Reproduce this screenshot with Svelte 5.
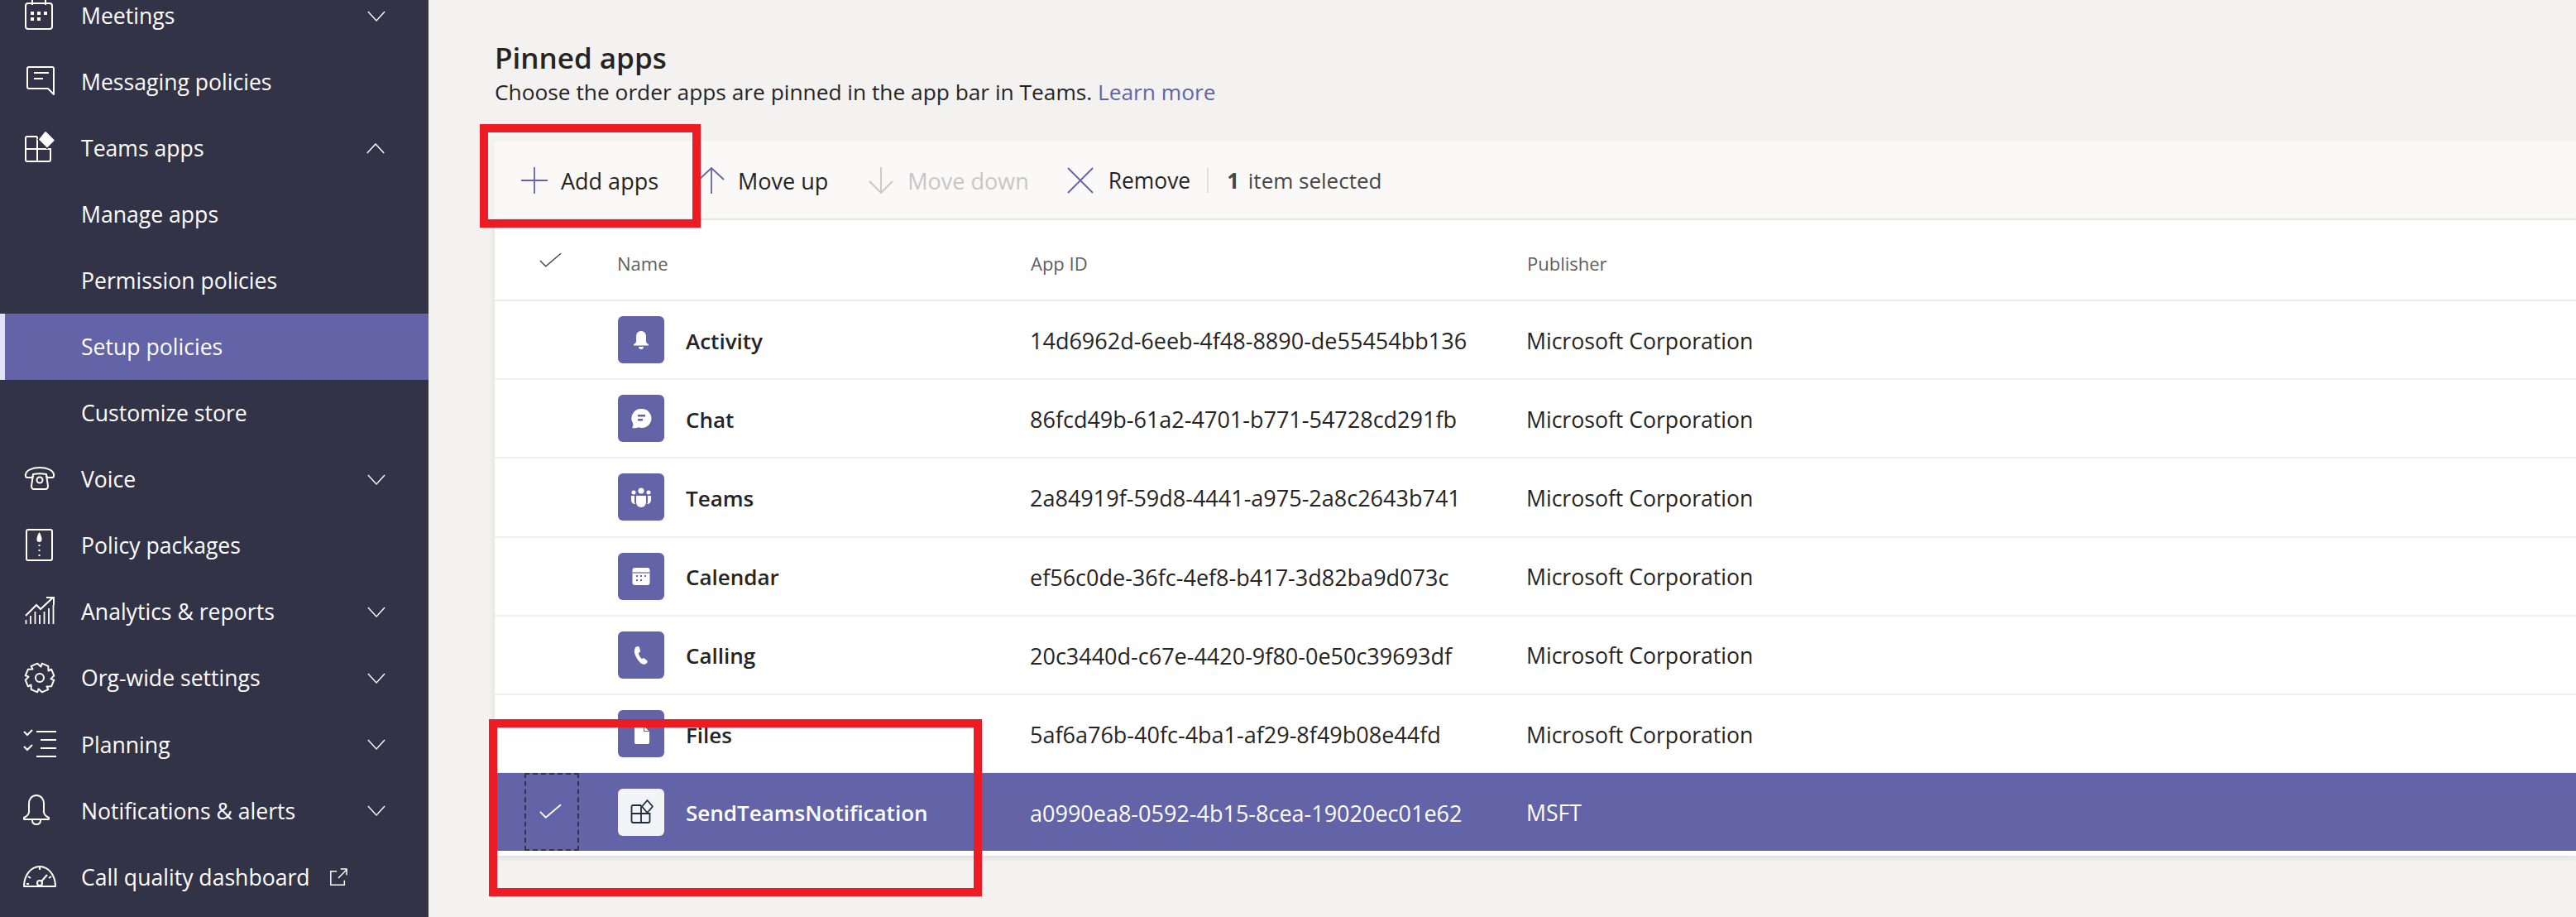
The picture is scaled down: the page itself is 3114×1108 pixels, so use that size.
<script>
  const navItems = [
    { label: "Meetings", icon: "meetings", chevron: "down" },
    { label: "Messaging policies", icon: "messaging" },
    { label: "Teams apps", icon: "apps", chevron: "up" },
    { label: "Manage apps" },
    { label: "Permission policies" },
    { label: "Setup policies", active: true },
    { label: "Customize store" },
    { label: "Voice", icon: "voice", chevron: "down" },
    { label: "Policy packages", icon: "packages" },
    { label: "Analytics & reports", icon: "analytics", chevron: "down" },
    { label: "Org-wide settings", icon: "settings", chevron: "down" },
    { label: "Planning", icon: "planning", chevron: "down" },
    { label: "Notifications & alerts", icon: "bell", chevron: "down" },
    { label: "Call quality dashboard", icon: "gauge", external: true },
  ];

  const apps = [
    { name: "Activity", id: "14d6962d-6eeb-4f48-8890-de55454bb136", publisher: "Microsoft Corporation", icon: "activity" },
    { name: "Chat", id: "86fcd49b-61a2-4701-b771-54728cd291fb", publisher: "Microsoft Corporation", icon: "chat" },
    { name: "Teams", id: "2a84919f-59d8-4441-a975-2a8c2643b741", publisher: "Microsoft Corporation", icon: "teams" },
    { name: "Calendar", id: "ef56c0de-36fc-4ef8-b417-3d82ba9d073c", publisher: "Microsoft Corporation", icon: "calendar" },
    { name: "Calling", id: "20c3440d-c67e-4420-9f80-0e50c39693df", publisher: "Microsoft Corporation", icon: "calling" },
    { name: "Files", id: "5af6a76b-40fc-4ba1-af29-8f49b08e44fd", publisher: "Microsoft Corporation", icon: "files" },
    { name: "SendTeamsNotification", id: "a0990ea8-0592-4b15-8cea-19020ec01e62", publisher: "MSFT", icon: "custom", selected: true },
  ];

  // eight lobed cog outline, centred in the 40 box
  function gearPath() {
    const pts = [];
    for (let i = 0; i < 8; i++) {
      const a = (i * Math.PI) / 4 + Math.PI / 8;
      for (const [off, r] of [[-0.24, 17.5], [0.24, 17.5], [0.5, 13.5]]) {
        const t = a + off;
        pts.push(`${(20 + r * Math.cos(t)).toFixed(1)} ${(20 + r * Math.sin(t)).toFixed(1)}`);
      }
    }
    return "M" + pts.join("L") + "Z";
  }
</script>

{#snippet navIcon(name)}
  <svg class="nav-icon" viewBox="0 0 40 40" fill="none" stroke="currentColor" stroke-width="2">
    {#if name === "meetings"}
      <rect x="3" y="5" width="32" height="31" rx="3" />
      <path d="M11 0v7M27 0v7" />
      <path fill="currentColor" stroke="none" d="M9 15h4v4H9zM17 15h4v4h-4zM25 15h4v4h-4zM9 22h4v4H9zM17 22h4v4h-4z" />
    {:else if name === "messaging"}
      <path d="M7 2h28a2 2 0 0 1 2 2v31l-7-7H7a2 2 0 0 1-2-2V4a2 2 0 0 1 2-2z" stroke-linejoin="round" />
      <path d="M13 9h18M13 16h11" />
    {:else if name === "apps"}
      <path d="M17 6H5a2 2 0 0 0-2 2v26a2 2 0 0 0 2 2h26a2 2 0 0 0 2-2V21H3M17 6v30" />
      <path fill="currentColor" stroke="#333347" stroke-width="1.5" d="M28 -0.5l10 10a1.5 1.5 0 0 1 0 2l-9 9-11-11 8-10z" />
    {:else if name === "voice"}
      <path d="M3 16c-1-7 9-10 17-10s18 3 17 10c0 1-1 2-2 2h-5c-1 0-2-1-2-4-5-1-11-1-16 0 0 3-1 4-2 4H5c-1 0-2-1-2-2z" stroke-linejoin="round" />
      <path d="M12 15l-2 13c0 2 1 4 3 4h14c2 0 3-2 3-4l-2-13" />
      <circle cx="20" cy="21" r="3.5" />
    {:else if name === "packages"}
      <rect x="4" y="1" width="31" height="37" rx="2" />
      <path fill="currentColor" stroke="none" d="M19.5 4c2 3 3 6 3 9a3 3 0 0 1-6 0c0-3 1-6 3-9z" />
      <path d="M19.5 19v2M19.5 25v2M19.5 31v2" />
    {:else if name === "analytics"}
      <path d="M3 25l13-13 5 5 15-14M28 3h9v9" />
      <path d="M3.5 30v5M9 25v10M14.5 20v15M20 24v11M25.5 20v15M31 16v19M36.500 12v23" stroke-width="1.8" />
    {:else if name === "settings"}
      <path d={gearPath()} stroke-linejoin="round" />
      <circle cx="20" cy="20" r="5" />
    {:else if name === "planning"}
      <path d="M1 4l4 4 6-6M1 22l4 4 6-6" />
      <path d="M16 4h24M21 14h19M21 24h19M16 34h24" />
    {:else if name === "bell"}
      <path d="M16 1c-6 0-9 5-9 10v10c0 3-2 5-6 7v2h30v-2c-4-2-6-4-6-7V11c0-5-3-10-9-10z" stroke-linejoin="round" />
      <path d="M11 31c0 4 3 5 5 5s5-1 5-5" />
    {:else if name === "gauge"}
      <path d="M1 31c0-13 8-24 19-24s19 11 19 24z" stroke-linejoin="round" />
      <path d="M20 7v4M6 19l3 2M34 19l-3 2M4 28h3" />
      <circle cx="20" cy="27" r="3" />
      <path d="M22 25l7-8" />
    {/if}
  </svg>
{/snippet}

{#snippet appIcon(name)}
  <svg class="app-glyph" viewBox="0 0 56 57">
    {#if name === "activity"}
      <path fill="#fff" d="M28 18c-4 0-6 3-6 7v5c0 2-1 3-3 4v1.500h18V34c-2-1-3-2-3-4v-5c0-4-2-7-6-7z" />
      <path fill="#fff" d="M25 37h6c0 2-1 3-3 3s-3-1-3-3z" />
    {:else if name === "chat"}
      <path fill="#fff" d="M29 17a11.500 11.500 0 1 1-4 22.300c-2 .8-5 1.200-8 .9 1.500-2 1.500-4 1-6A11.500 11.500 0 0 1 29 17z" />
      <path fill="#6264a7" d="M24 24h9v2.500h-9zM24 29h6v2.500h-6z" />
    {:else if name === "teams"}
      <g fill="#fff">
        <circle cx="28" cy="21" r="3.500" />
        <circle cx="19" cy="23" r="2.500" />
        <circle cx="37" cy="23" r="2.500" />
        <path d="M22 27h12v8a6 6 0 0 1-12 0z" />
        <path d="M16 27h4v8l1 2c-3 0-5-2-5-5zM36 27h4v5c0 3-2 5-5 5l1-2z" />
      </g>
    {:else if name === "calendar"}
      <rect x="17.500" y="18" width="21" height="21" rx="3" fill="#fff" />
      <path stroke="#6264a7" stroke-width="1.200" d="M17.500 24h21" />
      <path fill="#6264a7" d="M22 27h2v2h-2zM27 27h2v2h-2zM32 27h2v2h-2zM22 32h2v2h-2zM27 32h2v2h-2z" />
    {:else if name === "calling"}
      <path fill="#fff" d="M21 19l3-1c1 0 2 .500 2 1.500l1 4c0 1-.500 1.500-2 2.500 0 2 2 6 4 7 1-.500 2-1 3-.500l3 2.500c1 1 1 2 0 3l-2 1.500c-2 1-5 0-8-4-3-4-6-10-5-13 0-1 .500-2 1-3z" />
    {:else if name === "files"}
      <path fill="#fff" d="M22 19h9l7 7v13a2 2 0 0 1-2 2H22a2 2 0 0 1-2-2V21a2 2 0 0 1 2-2z" />
      <path fill="#6264a7" d="M31 19v7h7l-1-1h-5v-6z" />
    {:else if name === "custom"}
      <g fill="none" stroke="#252a3c" stroke-width="1.800">
        <path d="M28 20h-9.500a2 2 0 0 0-2 2v17a2 2 0 0 0 2 2h18a2 2 0 0 0 2-2V30H16.500M28 20v21" />
        <path fill="#f3f4f7" d="M35.500 14l6.500 7.500-6.500 7.500-6.500-7.500z" stroke-linejoin="round" />
      </g>
    {/if}
  </svg>
{/snippet}

<div class="page">
  <nav class="sidebar">
    {#each navItems as item}
      <div class="nav-row" class:active={item.active}>
        <span class="nav-slot">
          {#if item.icon}{@render navIcon(item.icon)}{/if}
        </span>
        <span class="nav-label">{item.label}</span>
        {#if item.external}
          <svg class="external" viewBox="0 0 24 24" fill="none" stroke="currentColor" stroke-width="1.600">
            <path d="M10 4H2v18h18v-6M12 13L23 2M15 1h8v8" />
          </svg>
        {/if}
        {#if item.chevron}
          <svg class="chevron" class:up={item.chevron === "up"} viewBox="0 0 24 14" fill="none" stroke="currentColor" stroke-width="1.500">
            <path d="M1 1l11 12L23 1" />
          </svg>
        {/if}
      </div>
    {/each}
  </nav>

  <main class="main">
    <h2 class="title">Pinned apps</h2>
    <p class="subtitle">Choose the order apps are pinned in the app bar in Teams. <a href="#learn">Learn more</a></p>

    <div class="toolbar">
      <button class="tool add">
        <svg viewBox="0 0 32 32" stroke="#6264a7" stroke-width="1.800"><path d="M16 0v32M0 16h32" /></svg>
        Add apps
      </button>
      <button class="tool up">
        <svg viewBox="0 0 32 32" fill="none" stroke="#6264a7" stroke-width="1.800"><path d="M16 32V1M1 15L16 1l15 14" /></svg>
        Move up
      </button>
      <button class="tool down" disabled>
        <svg viewBox="0 0 32 32" fill="none" stroke="#c8c6c4" stroke-width="1.800"><path d="M16 0v31M2 17l14 14 14-14" /></svg>
        Move down
      </button>
      <button class="tool remove">
        <svg viewBox="0 0 32 32" stroke="#6264a7" stroke-width="1.800"><path d="M1 1l30 30M31 1L1 31" /></svg>
        Remove
      </button>
      <span class="divider"></span>
      <span class="count"><b>1</b> item selected</span>
    </div>

    <div class="table">
      <div class="row head">
        <span class="check">
          <svg viewBox="0 0 28 18" fill="none" stroke="#484644" stroke-width="1.500"><path d="M1 10l7 7L27 1" /></svg>
        </span>
        <span class="cell">Name</span>
        <span class="cell">App ID</span>
        <span class="cell">Publisher</span>
      </div>
      {#each apps as app}
        <div class="row" class:selected={app.selected}>
          <span class="check">
            {#if app.selected}
              <span class="focus"></span>
              <svg viewBox="0 0 28 18" fill="none" stroke="#fff" stroke-width="1.800"><path d="M1 10l7 7L27 1" /></svg>
            {/if}
          </span>
          <span class="name">
            <span class="app-icon">{@render appIcon(app.icon)}</span>
            <span class="app-name">{app.name}</span>
          </span>
          <span class="cell app-id">{app.id}</span>
          <span class="cell publisher">{app.publisher}</span>
        </div>
      {/each}
    </div>

    <div class="callout callout-add"></div>
    <div class="callout callout-row"></div>
  </main>
</div>

<style>
  :global(body) {
    margin: 0;
    overflow: hidden;
  }

  .page {
    display: flex;
    height: 1108px;
    overflow: hidden;
    font-family: "Open Sans", "Noto Sans", sans-serif;
    font-size: 26px;
    color: #252423;
    background: #f3f2f1;
  }

  .sidebar {
    width: 518px;
    flex: none;
    margin-top: -21px;
    background: #333347;
    color: #fff;
  }

  .nav-row {
    display: flex;
    align-items: center;
    height: 80.05px;
    padding-left: 28px;
    padding-right: 52px;
    box-sizing: border-box;
  }

  .nav-row.active {
    background: #6264a7;
    border-left: 6px solid #e2e2f6;
    padding-left: 22px;
  }

  .nav-slot {
    width: 40px;
    height: 40px;
    margin-right: 30px;
    flex: none;
  }

  .nav-icon {
    display: block;
    width: 40px;
    height: 40px;
    overflow: visible;
  }

  .nav-label {
    font-size: 26.6px;
    white-space: nowrap;
  }

  .external {
    width: 22px;
    height: 22px;
    margin-left: 23px;
  }

  .chevron {
    width: 22px;
    height: 13px;
    margin-left: auto;
  }

  .chevron.up {
    transform: rotate(180deg);
    width: 24px;
  }

  .main {
    flex: 1;
    position: relative;
    padding: 48px 0 0 80px;
    min-width: 0;
  }

  .title {
    margin: 0;
    font-size: 35px;
    line-height: 44px;
    font-weight: 600;
  }

  .subtitle {
    margin: 0 0 40px;
    line-height: 38px;
    font-size: 26.3px;
  }

  .subtitle a {
    color: #6264a7;
    text-decoration: none;
  }

  .toolbar {
    display: flex;
    align-items: center;
    height: 94px;
    padding-left: 32px;
    background: #faf9f8;
    border-bottom: 2px solid #edebe9;
  }

  .tool {
    display: flex;
    align-items: center;
    gap: 16px;
    padding: 2px 0 0;
    border: 0;
    background: none;
    font: inherit;
    font-size: 27px;
    color: #252423;
    white-space: nowrap;
  }

  .tool svg {
    width: 32px;
    height: 32px;
    flex: none;
  }

  .tool:disabled {
    color: #c8c6c4;
  }

  .tool.up {
    margin-left: 48px;
  }

  .tool.down {
    margin-left: 48px;
  }

  .tool.remove {
    margin-left: 46px;
    gap: 18px;
    font-size: 26.4px;
  }

  .divider {
    width: 2px;
    height: 30px;
    margin: 2px 22px 0 20px;
    background: #e1dfdd;
  }

  .count {
    padding-top: 2px;
    color: #484644;
  }

  .count b {
    font-weight: 700;
    margin-right: 4px;
  }

  .table {
    background: #fff;
    padding-bottom: 6px;
    box-shadow: 0 2px 8px rgba(0, 0, 0, 0.1);
  }

  .row {
    display: grid;
    grid-template-columns: 147px 500px 600px 1fr;
    align-items: center;
    height: 95.2px;
    box-sizing: border-box;
    border-bottom: 2px solid #f0f0f0;
    font-size: 26px;
  }

  .row.head {
    height: 98px;
    font-size: 22px;
    color: #605e5c;
    border-bottom-color: #edebe9;
  }

  .row.head .cell {
    padding: 8px 0 0 1px;
  }

  .cell {
    padding-top: 2px;
  }

  .app-id {
    font-size: 27px;
  }

  .publisher {
    font-size: 26.6px;
  }

  .row.selected {
    height: 94px;
    margin-top: -1px;
    border-bottom: 0;
    background: #6264a7;
    color: #fff;
  }

  .check {
    display: flex;
    justify-content: center;
    align-items: center;
    align-self: stretch;
    position: relative;
    width: 134px;
  }

  .check svg {
    width: 27px;
    height: 18px;
  }

  .selected .check svg {
    margin-bottom: 2px;
  }

  .focus {
    position: absolute;
    left: 36px;
    top: 0;
    width: 62px;
    height: 90px;
    border: 2px dashed #33344a;
    border-radius: 2px;
  }

  .name {
    display: flex;
    align-items: center;
    gap: 26px;
    padding-left: 2px;
    font-weight: 600;
  }

  .app-name {
    padding-top: 2px;
  }

  .app-icon {
    display: block;
    width: 56px;
    height: 57px;
    border-radius: 6px;
    background: #6264a7;
  }

  .selected .app-icon {
    background: #f3f4f7;
  }

  .app-glyph {
    display: block;
    width: 56px;
    height: 57px;
  }

  .callout {
    position: absolute;
    box-sizing: border-box;
    border: 10px solid #ed1c24;
  }

  .callout-add {
    left: 62px;
    top: 150px;
    width: 267px;
    height: 125px;
  }

  .callout-row {
    left: 73px;
    top: 869px;
    width: 596px;
    height: 214px;
  }
</style>
